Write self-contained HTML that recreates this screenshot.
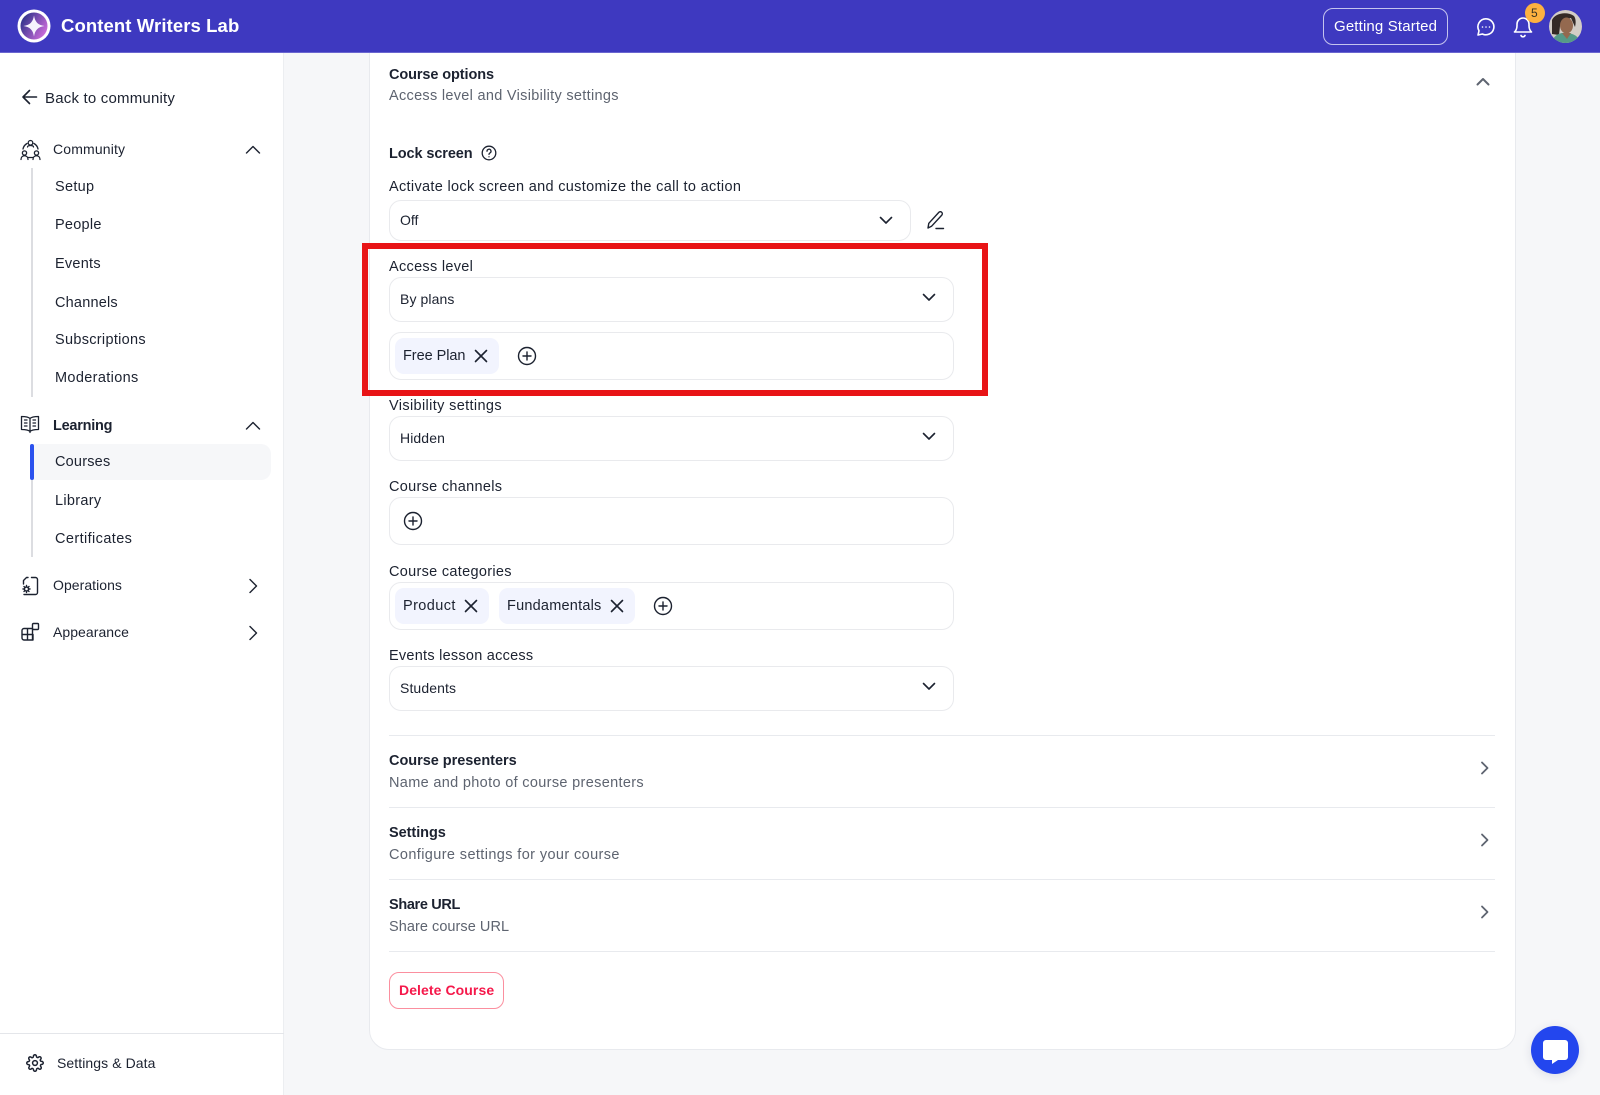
<!DOCTYPE html>
<html lang="en"><head><meta charset="utf-8"><title>Content Writers Lab</title>
<style>
*{box-sizing:border-box}
html,body{margin:0;padding:0;width:1600px;height:1095px;overflow:hidden;background:#f6f7f9;font-family:"Liberation Sans",sans-serif;color:#1c2230}
.t{position:absolute;white-space:nowrap;font-size:15px;line-height:20px;height:20px;letter-spacing:.3px}
.b{font-weight:700}
.g{color:#5e6470}
.abs,svg{position:absolute}
svg{fill:none;stroke:#1c2230;stroke-width:1.6;stroke-linecap:round;stroke-linejoin:round}
.hdr{position:absolute;left:0;top:0;width:1600px;height:53px;background:#3e39c0;border-bottom:1px solid #6a66d0}
.side{position:absolute;left:0;top:53px;width:284px;height:1042px;background:#fff;border-right:1px solid #eceef1}
.card{position:absolute;left:369px;top:30px;width:1147px;height:1020px;background:#fff;border:1px solid #e8eaee;border-radius:20px}
.f{position:absolute;left:389px;width:565px;background:#fff;border:1px solid #e9eaed;border-radius:12px}
.chip{position:absolute;height:36px;background:#f2f4fe;border-radius:9px}
.hr{position:absolute;left:389px;width:1106px;height:1px;background:#e8eaee}
.vl{position:absolute;left:31px;width:2px;background:#dcdde1}
</style></head><body>
<div class="card"></div>
<div class="hdr"></div>
<svg style="left:17px;top:9px;stroke:none" width="34" height="34" viewBox="0 0 34 34"><defs><linearGradient id="lg" x1="0" y1="0" x2="1" y2="0.6"><stop offset="0" stop-color="#1a2a80"/><stop offset="1" stop-color="#c66ad8"/></linearGradient></defs><circle cx="17" cy="17" r="16.500" fill="#fff"/><circle cx="17" cy="17" r="13.500" fill="url(#lg)"/><path d="M17 6.500C18 13 21 16 27.500 17C21 18 18 21 17 27.500C16 21 13 18 6.500 17C13 16 16 13 17 6.500Z" fill="#f6f2fd"/></svg>
<div class="t b" style="left:61px;top:16px;color:#fff;font-size:18.500px;letter-spacing:.1px">Content Writers Lab</div>
<div class="abs" style="left:1323px;top:8px;width:125px;height:37px;border:1px solid #c5c4ee;border-radius:10px"></div>
<div class="t" style="left:1334px;top:17px;color:#fff;letter-spacing:.15px">Getting Started</div>
<svg style="left:1476px;top:17px;stroke:#fff" width="20" height="20" viewBox="0 0 20 20"><path d="M10 1.800a8 8 0 1 1-3.600 15.200L2 18l1-4.200A8 8 0 0 1 10 1.800Z"/><path d="M6.500 10h.01M10 10h.01M13.500 10h.01"/></svg>
<svg style="left:1513px;top:16px;stroke:#fff" width="20" height="22" viewBox="0 0 20 22"><path d="M1.500 16h17c-1.800-1.600-2.500-3.200-2.500-6.500V8a6 6 0 0 0-12 0v1.500C4 12.800 3.300 14.400 1.500 16Z"/><path d="M8 19.500a2.200 2.200 0 0 0 4 0"/></svg>
<div class="abs" style="left:1525px;top:3px;width:20px;height:20px;border-radius:50%;background:#fdb140"></div>
<div class="t" style="left:1531px;top:3px;font-size:12px;letter-spacing:0;color:#3a3320">5</div>
<svg style="left:1549px;top:10px;stroke:none" width="33" height="33" viewBox="0 0 33 33"><defs><clipPath id="cp"><circle cx="16.500" cy="16.500" r="16.500"/></clipPath></defs><g clip-path="url(#cp)"><rect width="33" height="33" fill="#d3cdc6"/><path d="M3 24V10C6 3 18 1 25 6C27 9 27 13 26 17L22 8C18 9 13 10 11 16L10 25Z" fill="#342a26"/><ellipse cx="17.500" cy="15.500" rx="6.500" ry="8" fill="#94694f"/><path d="M3 33C4 26 10 22 17 23C25 23 30 27 32 33Z" fill="#569a88"/><path d="M13 23L18 29L22 23Z" fill="#94694f"/></g></svg>

<div class="side"></div>
<svg style="left:21px;top:88px" width="18" height="18" viewBox="0 0 18 18"><path d="M15.500 9H2.500M8.500 2.500L2 9l6.500 6.500"/></svg>
<div class="t" style="left:45px;top:89px;letter-spacing:.2px">Back to community</div>

<svg style="left:20px;top:139px;stroke-width:1.300" width="21" height="22" viewBox="0 0 21 22"><circle cx="10.500" cy="3.800" r="2.300"/><circle cx="4.500" cy="14" r="2.100"/><circle cx="16.500" cy="14" r="2.100"/><path d="M1 20.500c0-5 7-5 7 0M13 20.500c0-5 7-5 7 0M7 4.500A8 8 0 0 0 3 10M14 4.500A8 8 0 0 1 18 10M8 18.500h5M7.500 8c0-2 6-2 6 0"/></svg>
<div class="t" style="left:53px;top:139px;font-size:14px;letter-spacing:.15px">Community</div>
<svg style="left:245px;top:145px;stroke-width:1.400" width="16" height="10" viewBox="0 0 16 10"><path d="M1.500 8L8 1.500 14.500 8"/></svg>
<div class="vl" style="top:168px;height:229px"></div>
<div class="t" style="left:55px;top:177px;font-size:14.500px">Setup</div>
<div class="t" style="left:55px;top:215px;font-size:14.500px;letter-spacing:.25px">People</div>
<div class="t" style="left:55px;top:254px;font-size:14.500px;letter-spacing:.25px">Events</div>
<div class="t" style="left:55px;top:293px;font-size:14.500px;letter-spacing:.2px">Channels</div>
<div class="t" style="left:55px;top:330px;font-size:14.500px;letter-spacing:.3px">Subscriptions</div>
<div class="t" style="left:55px;top:368px;font-size:14.500px;letter-spacing:.35px">Moderations</div>

<svg style="left:20px;top:415px;stroke-width:1.300" width="20" height="19" viewBox="0 0 20 19"><path d="M10 3.500C8.500 2 5 1.500 1.500 1.500v13c3.500 0 7 .5 8.500 2 1.500-1.500 5-2 8.500-2v-13c-3.500 0-7 .5-8.500 2ZM10 3.500v14M4.500 5h2.500M4.500 8h2.500M4.500 11h2.500M13 5h2.500M13 8h2.500M13 11h2.500"/></svg>
<div class="t b" style="left:53px;top:416px;font-size:14.500px;letter-spacing:-.25px">Learning</div>
<svg style="left:245px;top:421px;stroke-width:1.400" width="16" height="10" viewBox="0 0 16 10"><path d="M1.500 8L8 1.500 14.500 8"/></svg>
<div class="vl" style="top:444px;height:113px"></div>
<div class="abs" style="left:31px;top:444px;width:240px;height:36px;background:#f6f7f9;border-radius:0 10px 10px 0"></div>
<div class="abs" style="left:30px;top:444px;width:4px;height:36px;background:#2b52ee;border-radius:2px"></div>
<div class="t" style="left:55px;top:452px;font-size:14.500px;letter-spacing:.2px">Courses</div>
<div class="t" style="left:55px;top:491px;font-size:14.500px">Library</div>
<div class="t" style="left:55px;top:529px;font-size:14.500px;letter-spacing:.4px">Certificates</div>

<svg style="left:21px;top:576px;stroke-width:1.400" width="18" height="20" viewBox="0 0 18 20"><path d="M10.500 1.500h4a2 2 0 0 1 2 2v13a2 2 0 0 1-2 2H3M2.500 8V4.500L5.500 1.500h1.500"/><circle cx="5.500" cy="13" r="2"/><path d="M5.500 9.500v1M5.500 15.500v1M2 13h1M8 13h1M3 10.500l.7.7M8 10.500l-.7.7M3 15.500l.7-.7M8 15.500l-.7-.7"/></svg>
<div class="t" style="left:53px;top:575px;font-size:14px;letter-spacing:.05px">Operations</div>
<svg style="left:248px;top:578px;stroke-width:1.400" width="10" height="16" viewBox="0 0 10 16"><path d="M2 1.500L8.500 8 2 14.500"/></svg>

<svg style="left:21px;top:622px;stroke-width:1.400" width="19" height="20" viewBox="0 0 19 20"><path d="M3 6.500h8.500V18H3a2 2 0 0 1-2-2V8.500a2 2 0 0 1 2-2ZM1 12.500h10.500M6.500 6.500V18M11.500 12.500h.5v5.500h-.5"/><rect x="11.500" y="1.500" width="6" height="6" rx="1"/></svg>
<div class="t" style="left:53px;top:622px;font-size:14px;letter-spacing:.05px">Appearance</div>
<svg style="left:248px;top:625px;stroke-width:1.400" width="10" height="16" viewBox="0 0 10 16"><path d="M2 1.500L8.500 8 2 14.500"/></svg>

<div class="abs" style="left:0;top:1033px;width:284px;height:1px;background:#e4e6ea"></div>
<svg style="left:26px;top:1054px;stroke-width:2" width="18" height="18" viewBox="0 0 24 24"><circle cx="12" cy="12" r="3.200"/><path d="M19.400 15a1.650 1.650 0 0 0 .33 1.820l.06.06a2 2 0 1 1-2.830 2.830l-.06-.06a1.650 1.650 0 0 0-2.900 1.170V21a2 2 0 1 1-4 0v-.09a1.650 1.650 0 0 0-2.800-1.170l-.06.06a2 2 0 1 1-2.830-2.830l.06-.06a1.650 1.650 0 0 0-1.170-2.800H3a2 2 0 1 1 0-4h.09a1.650 1.650 0 0 0 1.170-2.800l-.06-.06a2 2 0 1 1 2.830-2.830l.06.06a1.650 1.650 0 0 0 2.800-1.170V3a2 2 0 1 1 4 0v.09a1.650 1.650 0 0 0 2.800 1.170l.06-.06a2 2 0 1 1 2.830 2.830l-.06.06a1.650 1.650 0 0 0 1.170 2.800H21a2 2 0 1 1 0 4h-.09a1.650 1.650 0 0 0-1.510 1Z"/></svg>
<div class="t" style="left:57px;top:1053px;font-size:14px;letter-spacing:.08px">Settings &amp; Data</div>

<div class="t b" style="left:389px;top:65px;font-size:14.500px;letter-spacing:-.1px">Course options</div>
<div class="t g" style="left:389px;top:86px;font-size:14.500px">Access level and Visibility settings</div>
<svg style="left:1476px;top:77px;stroke:#5e6470;stroke-width:2" width="14" height="10" viewBox="0 0 14 10"><path d="M1.500 7.500L7 2l5.500 5.500"/></svg>

<div class="t b" style="left:389px;top:144px;font-size:14.500px;letter-spacing:-.1px">Lock screen</div>
<svg style="left:481px;top:145px;stroke-width:1.300" width="16" height="16" viewBox="0 0 16 16"><circle cx="8" cy="8" r="6.800"/><path d="M6 6.200a2 2 0 1 1 3 1.700c-.7.400-1 .8-1 1.500M8 11.800h.01"/></svg>
<div class="t" style="left:389px;top:177px;font-size:14.500px;letter-spacing:.32px">Activate lock screen and customize the call to action</div>
<div class="f" style="top:200px;height:41px;width:522px"></div>
<div class="t" style="left:400px;top:210px;font-size:14px;letter-spacing:0">Off</div>
<svg style="left:879px;top:216px" width="14" height="9" viewBox="0 0 14 9"><path d="M1.500 1.500L7 7l5.500-5.500"/></svg>
<svg style="left:926px;top:210px;stroke-width:1.400" width="20" height="20" viewBox="0 0 20 20"><path d="M2 18l.8-4.700L12.800 2.400a2 2 0 0 1 3 2.700L5.500 16.300ZM10 18.500h7.500"/></svg>

<div class="f" style="top:277px;height:45px"></div>
<div class="t" style="left:389px;top:257px;font-size:14.500px">Access level</div>
<div class="t" style="left:400px;top:289px;font-size:14px;letter-spacing:.1px">By plans</div>
<svg style="left:922px;top:293px" width="14" height="9" viewBox="0 0 14 9"><path d="M1.500 1.500L7 7l5.500-5.500"/></svg>
<div class="f" style="top:332px;height:48px"></div>
<div class="chip" style="left:395px;top:338px;width:104px"></div>
<div class="t" style="left:403px;top:346px;font-size:14.500px;letter-spacing:-.05px">Free Plan</div>
<svg style="left:474px;top:349px" width="14" height="14" viewBox="0 0 14 14"><path d="M1.500 1.500l11 11M12.500 1.500l-11 11"/></svg>
<svg style="left:517px;top:346px;stroke-width:1.400" width="20" height="20" viewBox="0 0 20 20"><circle cx="10" cy="10" r="8.500"/><path d="M10 6v8M6 10h8"/></svg>

<div class="abs" style="left:362px;top:243px;width:626px;height:153px;border:6px solid #e81416"></div>

<div class="t" style="left:389px;top:396px;font-size:14.500px;letter-spacing:.36px">Visibility settings</div>
<div class="f" style="top:416px;height:45px"></div>
<div class="t" style="left:400px;top:428px;font-size:14px;letter-spacing:.1px">Hidden</div>
<svg style="left:922px;top:432px" width="14" height="9" viewBox="0 0 14 9"><path d="M1.500 1.500L7 7l5.500-5.500"/></svg>

<div class="t" style="left:389px;top:477px;font-size:14.500px">Course channels</div>
<div class="f" style="top:497px;height:48px"></div>
<svg style="left:403px;top:511px;stroke-width:1.400" width="20" height="20" viewBox="0 0 20 20"><circle cx="10" cy="10" r="8.500"/><path d="M10 6v8M6 10h8"/></svg>

<div class="t" style="left:389px;top:562px;font-size:14.500px">Course categories</div>
<div class="f" style="top:582px;height:48px"></div>
<div class="chip" style="left:395px;top:588px;width:94px"></div>
<div class="t" style="left:403px;top:596px;font-size:14.500px;letter-spacing:.4px">Product</div>
<svg style="left:464px;top:599px" width="14" height="14" viewBox="0 0 14 14"><path d="M1.500 1.500l11 11M12.500 1.500l-11 11"/></svg>
<div class="chip" style="left:499px;top:588px;width:136px"></div>
<div class="t" style="left:507px;top:596px;font-size:14.500px;letter-spacing:.22px">Fundamentals</div>
<svg style="left:610px;top:599px" width="14" height="14" viewBox="0 0 14 14"><path d="M1.500 1.500l11 11M12.500 1.500l-11 11"/></svg>
<svg style="left:653px;top:596px;stroke-width:1.400" width="20" height="20" viewBox="0 0 20 20"><circle cx="10" cy="10" r="8.500"/><path d="M10 6v8M6 10h8"/></svg>

<div class="t" style="left:389px;top:646px;font-size:14.500px;letter-spacing:.25px">Events lesson access</div>
<div class="f" style="top:666px;height:45px"></div>
<div class="t" style="left:400px;top:678px;font-size:14px;letter-spacing:.1px">Students</div>
<svg style="left:922px;top:682px" width="14" height="9" viewBox="0 0 14 9"><path d="M1.500 1.500L7 7l5.500-5.500"/></svg>

<div class="hr" style="top:735px"></div>
<div class="t b" style="left:389px;top:751px;font-size:14.500px;letter-spacing:-.03px">Course presenters</div>
<div class="t g" style="left:389px;top:773px;font-size:14.500px;letter-spacing:.33px">Name and photo of course presenters</div>
<svg style="left:1480px;top:761px;stroke:#5e6470;stroke-width:1.800" width="9" height="14" viewBox="0 0 9 14"><path d="M2 1.500L7.500 7 2 12.500"/></svg>
<div class="hr" style="top:807px"></div>
<div class="t b" style="left:389px;top:823px;font-size:14.500px;letter-spacing:-.05px">Settings</div>
<div class="t g" style="left:389px;top:845px;font-size:14.500px;letter-spacing:.39px">Configure settings for your course</div>
<svg style="left:1480px;top:833px;stroke:#5e6470;stroke-width:1.800" width="9" height="14" viewBox="0 0 9 14"><path d="M2 1.500L7.500 7 2 12.500"/></svg>
<div class="hr" style="top:879px"></div>
<div class="t b" style="left:389px;top:895px;font-size:14.500px;letter-spacing:-.35px">Share URL</div>
<div class="t g" style="left:389px;top:917px;font-size:14.500px;letter-spacing:.05px">Share course URL</div>
<svg style="left:1480px;top:905px;stroke:#5e6470;stroke-width:1.800" width="9" height="14" viewBox="0 0 9 14"><path d="M2 1.500L7.500 7 2 12.500"/></svg>
<div class="hr" style="top:951px"></div>
<div class="abs" style="left:389px;top:972px;width:115px;height:37px;border:1px solid #fb8f9f;border-radius:10px"></div>
<div class="t b" style="left:399px;top:980px;font-size:14px;letter-spacing:.08px;color:#f5184a">Delete Course</div>

<div class="abs" style="left:1531px;top:1026px;width:48px;height:48px;border-radius:50%;background:#2346ee;box-shadow:0 2px 10px rgba(30,40,90,.12)"></div>
<svg style="left:1542px;top:1039px;stroke:none" width="27" height="26" viewBox="0 0 27 26"><path d="M4 1h19a3 3 0 0 1 3 3v14a3 3 0 0 1-3 3h-7l-6 4v-4H4a3 3 0 0 1-3-3V4a3 3 0 0 1 3-3Z" fill="#fff"/></svg>
</body></html>
